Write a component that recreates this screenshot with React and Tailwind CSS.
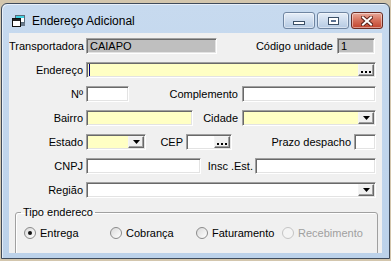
import React from 'react';

const font = "font-['Liberation_Sans',Arial,sans-serif]";
const sunken =
  'border border-t-[#a0a0a0] border-l-[#a0a0a0] border-r-white border-b-white shadow-[inset_1px_1px_0_#696969,inset_-1px_-1px_0_#e3e3e3]';
const raised =
  'border border-t-[#f4f4f4] border-l-[#f4f4f4] border-r-[#696969] border-b-[#696969] shadow-[inset_-1px_-1px_0_#a0a0a0] bg-[#f0f0f0]';

function Dots() {
  return (
    <div className={`w-[16px] h-[12px] ${raised} flex items-center justify-center gap-[2px] pt-[3px]`}>
      <span className="w-[2px] h-[2px] bg-black" />
      <span className="w-[2px] h-[2px] bg-black" />
      <span className="w-[2px] h-[2px] bg-black" />
    </div>
  );
}

function Arrow() {
  return (
    <div className={`w-[16px] h-[12px] ${raised} flex items-center justify-center`}>
      <svg width="7" height="4" viewBox="0 0 7 4">
        <polygon points="0,0 7,0 3.5,4" fill="#000" />
      </svg>
    </div>
  );
}

function Field({ w, bg = 'bg-white', text, right, caret }) {
  return (
    <div className={`${w} h-[16px] ${bg} ${sunken} flex items-center pl-[2px] pr-[1px] shrink-0`}>
      {caret && <span className="w-[1px] h-[12px] bg-[#000080]" />}
      {text && <span className="text-[11px] leading-none pl-[1px]">{text}</span>}
      {right && <div className="ml-auto">{right}</div>}
    </div>
  );
}

function Label({ w, children }) {
  return <div className={`${w} shrink-0 text-right text-[11px] leading-none whitespace-nowrap`}>{children}</div>;
}

function Radio({ label, checked, disabled }) {
  return (
    <div className="w-[86px] shrink-0 flex items-center gap-[4px]">
      <span
        className={`w-[12px] h-[12px] rounded-full border flex items-center justify-center ${
          disabled
            ? 'border-[#c4c4c4] bg-[#f4f4f4]'
            : 'border-[#8a8a8a] bg-gradient-to-br from-[#dadada] to-white'
        }`}
      >
        {checked && <span className="w-[4px] h-[4px] rounded-full bg-[#111]" />}
      </span>
      <span className={`text-[11px] leading-none ${disabled ? 'text-[#a0a0a0]' : ''}`}>{label}</span>
    </div>
  );
}

function CaptionBtn({ children, red }) {
  return (
    <div
      className={`w-[32px] h-[17px] rounded-[3px] border flex items-center justify-center shadow-[inset_0_0_0_1px_rgba(255,255,255,0.45)] ${
        red
          ? 'border-[#6b2b22] bg-gradient-to-b from-[#e8a99b] via-[#d56f5a] to-[#c1422c]'
          : 'border-[#6f85a1] bg-gradient-to-b from-[#e6eef8] to-[#b5cae3]'
      }`}
    >
      {children}
    </div>
  );
}

export default function App() {
  return (
    <div className={`w-[391px] h-[261px] bg-[#d3c6ad] pt-[3px] pl-[1px] overflow-hidden ${font}`}>
      <div className="w-[389px] h-[256px] border border-[#3f4b5b] rounded-t-[6px] bg-gradient-to-b from-[#c7daef] to-[#bcd2ea] shadow-[inset_1px_1px_0_rgba(255,255,255,0.6)] flex flex-col">
        {/* title bar */}
        <div className="h-[29px] flex items-start pt-[8px] pl-[10px] pr-[6px]">
          <div className="h-[17px] flex items-center">
            <svg width="14" height="12" viewBox="0 0 14 12">
              <rect x="3.5" y="0.5" width="9" height="7" fill="#fff" stroke="#5a6b7a" />
              <rect x="4" y="1" width="8" height="2" fill="#3fd0e0" />
              <rect x="0.5" y="3.5" width="8" height="8" fill="#fff" stroke="#111" />
              <rect x="1" y="4" width="7" height="2" fill="#222" />
              <rect x="9" y="8" width="4" height="3" fill="#6a7a8a" />
            </svg>
            <span className="ml-[6px] text-[12px] leading-none text-black">Endereço Adicional</span>
          </div>
          <div className="ml-auto flex gap-[2px]">
            <CaptionBtn>
              <span className="mt-[5px] w-[12px] h-[4px] bg-white border border-[#3c5067]" />
            </CaptionBtn>
            <CaptionBtn>
              <span className="w-[11px] h-[8px] bg-white border border-[#3c5067] flex items-center justify-center">
                <span className="w-[5px] h-[2px] bg-[#5b7191]" />
              </span>
            </CaptionBtn>
            <CaptionBtn red>
              <svg width="12" height="10" viewBox="0 0 12 10">
                <path d="M2 1.5 L10 8.5 M10 1.5 L2 8.5" stroke="#5a231b" strokeWidth="4" strokeLinecap="square" />
                <path d="M2 1.5 L10 8.5 M10 1.5 L2 8.5" stroke="#fff" strokeWidth="2" strokeLinecap="square" />
              </svg>
            </CaptionBtn>
          </div>
        </div>

        {/* client */}
        <div className="mx-[7px] h-[220px] bg-[#f0f0f0] overflow-hidden text-black">
          <div className="flex flex-col gap-[8px] pt-[5px]">
            <div className="flex items-center">
              <Label w="w-[74px]">Transportadora</Label>
              <div className="w-[3px]" />
              <Field w="w-[131px]" bg="bg-[#bfbfbf]" text="CAIAPO" />
              <Label w="w-[116px]">Código unidade</Label>
              <div className="w-[4px]" />
              <Field w="w-[38px]" bg="bg-[#bfbfbf]" text="1" />
            </div>
            <div className="flex items-center">
              <Label w="w-[74px]">Endereço</Label>
              <div className="w-[3px]" />
              <Field w="w-[290px]" bg="bg-[#ffffc4]" caret right={<Dots />} />
            </div>
            <div className="flex items-center">
              <Label w="w-[74px]">Nº</Label>
              <div className="w-[3px]" />
              <Field w="w-[43px]" />
              <Label w="w-[109px]">Complemento</Label>
              <div className="w-[4px]" />
              <Field w="w-[134px]" />
            </div>
            <div className="flex items-center">
              <Label w="w-[74px]">Bairro</Label>
              <div className="w-[3px]" />
              <Field w="w-[107px]" bg="bg-[#ffffc4]" />
              <Label w="w-[45px]">Cidade</Label>
              <div className="w-[4px]" />
              <Field w="w-[134px]" bg="bg-[#ffffc4]" right={<Arrow />} />
            </div>
            <div className="flex items-center">
              <Label w="w-[74px]">Estado</Label>
              <div className="w-[3px]" />
              <Field w="w-[60px]" bg="bg-[#ffffc4]" right={<Arrow />} />
              <Label w="w-[37px]">CEP</Label>
              <div className="w-[3px]" />
              <Field w="w-[46px]" right={<Dots />} />
              <Label w="w-[119px]">Prazo despacho</Label>
              <div className="w-[3px]" />
              <Field w="w-[22px]" />
            </div>
            <div className="flex items-center">
              <Label w="w-[74px]">CNPJ</Label>
              <div className="w-[3px]" />
              <Field w="w-[115px]" />
              <Label w="w-[52px]">Insc .Est.</Label>
              <div className="w-[2px]" />
              <Field w="w-[121px]" />
            </div>
            <div className="flex items-center">
              <Label w="w-[74px]">Região</Label>
              <div className="w-[3px]" />
              <Field w="w-[290px]" right={<Arrow />} />
            </div>
            <fieldset className="ml-[6px] w-[363px] h-[60px] border border-[#a0a0a0] rounded-[3px] shadow-[inset_1px_1px_0_#fff]">
              <legend className="ml-[5px] px-[2px] text-[11px] leading-[13px]">Tipo endereco</legend>
              <div className="flex items-center pl-[8px] pt-[8px]">
                <Radio label="Entrega" checked />
                <Radio label="Cobrança" />
                <Radio label="Faturamento" />
                <Radio label="Recebimento" disabled />
              </div>
            </fieldset>
          </div>
        </div>
      </div>
    </div>
  );
}
